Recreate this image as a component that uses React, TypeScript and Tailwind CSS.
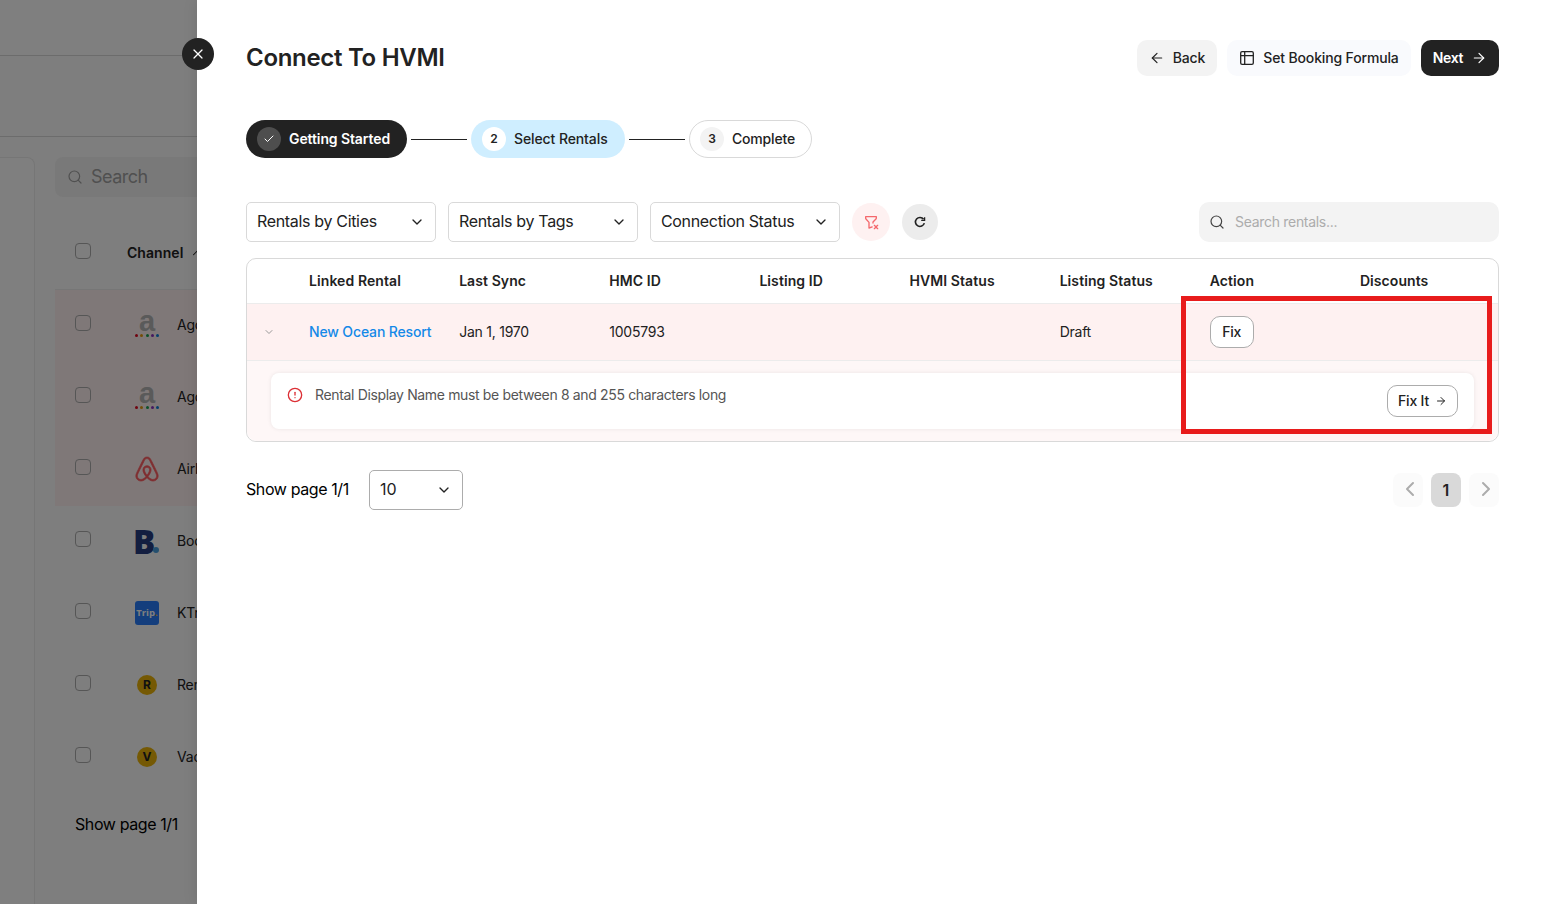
import React from 'react';
import {
    AlertCircle,
    ArrowLeft,
    ArrowRight,
    Check,
    ChevronDown,
    ChevronLeft,
    ChevronRight,
    ChevronUp,
    Search,
    X,
} from 'lucide-react';
import { SiAirbnb } from 'react-icons/si';
import { TbFilterX } from 'react-icons/tb';

const AgodaLogo = () => (
    <div className="flex h-6 w-6 flex-col items-center justify-between">
        <span className="h-[19px] font-['Liberation_Sans'] text-[29px] leading-[16px] font-bold text-[#b4b4b4]">a</span>
        <div className="flex w-full justify-between">
            <i className="h-[3px] w-[3px] rounded-full bg-[#e1061f]" />
            <i className="h-[3px] w-[3px] rounded-full bg-[#e89a0c]" />
            <i className="h-[3px] w-[3px] rounded-full bg-[#18a052]" />
            <i className="h-[3px] w-[3px] rounded-full bg-[#8a2fc0]" />
            <i className="h-[3px] w-[3px] rounded-full bg-[#0c7fd8]" />
        </div>
    </div>
);

const BookingLogo = () => (
    <div className="flex h-6 w-6 items-end justify-between">
        <span className="-ml-0.5 w-[18px] font-['Open_Sans'] text-[33px] leading-[23px] font-extrabold tracking-[-1px] text-[#263c80]">B</span>
        <i className="h-1.5 w-1.5 shrink-0 rounded-full bg-[#499fdd]" />
    </div>
);

const TripLogo = () => (
    <div className="flex h-6 w-6 items-center justify-center rounded-[3px] bg-[#287dfa] pb-px font-['Open_Sans'] text-[9.5px] leading-none font-bold text-white">
        Trip<span className="text-[#ffb400]">.</span>
    </div>
);

const LetterLogo = ({ letter }: { letter: string }) => (
    <div className="flex h-5 w-5 items-center justify-center rounded-full bg-[#eab308] text-[12px] font-bold text-[#222]">
        {letter}
    </div>
);

const channels = [
    { name: 'Agoda', logo: <AgodaLogo />, error: true },
    { name: 'Agoda', logo: <AgodaLogo />, error: true },
    { name: 'Airbnb', logo: <SiAirbnb strokeWidth={0.7} className="h-6 w-6 shrink-0 overflow-visible text-[#ff5a5f]" />, error: true },
    { name: 'Booking', logo: <BookingLogo />, error: false },
    { name: 'KTrip', logo: <TripLogo />, error: false },
    { name: 'Rentals', logo: <LetterLogo letter="R" />, error: false },
    { name: 'Vacation', logo: <LetterLogo letter="V" />, error: false },
];

const Checkbox = () => <span className="mb-1 block h-4 w-4 shrink-0 rounded-[4px] border border-[#acacac]" />;

const ChannelsPage = () => (
    <div className="flex h-full w-full flex-col bg-[#fcfcfc]">
        <div className="h-14 shrink-0 border-b border-[#d9d9d9] bg-white" />
        <div className="h-[81px] shrink-0 border-b border-[#d9d9d9]" />
        <div className="flex flex-1 gap-5 pt-5">
            <div className="w-[35px] shrink-0 rounded-tr-lg border-t border-r border-[#ececec] bg-white" />
            <div className="flex flex-1 flex-col">
                <div className="flex h-10 items-center gap-2 rounded-lg bg-[#f3f3f3] px-3 text-[#a0a0a0]">
                    <Search size={16} strokeWidth={1.8} />
                    <span className="pb-0.5 text-[18px] tracking-[-0.5px]">Search</span>
                </div>
                <div className="mt-5 flex h-[73px] items-center border-b border-[#ececec] pl-5">
                    <Checkbox />
                    <span className="ml-9 text-sm font-semibold tracking-[0.05px] text-[#222]">Channel</span>
                    <ChevronUp size={14} strokeWidth={1.8} className="ml-[7px] text-[#222]" />
                </div>
                {channels.map((channel, i) => (
                    <div
                        key={i}
                        className={`flex h-[72px] shrink-0 items-center pb-0.5 pl-5 ${channel.error ? 'bg-[#fef0f0]' : ''}`}
                    >
                        <Checkbox />
                        <div className="ml-11 flex w-6 shrink-0 justify-center">{channel.logo}</div>
                        <span className="ml-[18px] text-sm tracking-[-0.2px] text-[#222]">{channel.name}</span>
                    </div>
                ))}
                <div className="mt-[18px] pl-5 text-base tracking-[-0.4px] text-black">Show page 1/1</div>
            </div>
        </div>
    </div>
);

const TableIcon = () => (
    <svg width="16" height="16" viewBox="0 0 16 16" fill="none" stroke="currentColor" strokeWidth="1.3">
        <rect x="1.7" y="1.7" width="12.6" height="12.6" rx="1.4" />
        <path d="M1.7 5.7h12.6M5.7 1.7v12.6" />
    </svg>
);

const ReloadIcon = () => (
    <svg width="12" height="12" viewBox="0 0 12 12" fill="none" stroke="currentColor" strokeWidth="1.6">
        <path d="M10.3 7.1A4.5 4.5 0 1 1 9.6 3.3" />
        <path d="M10.6 1.2v3.2H7.2" strokeWidth="1.3" />
    </svg>
);

const Select = ({ label }: { label: string }) => (
    <button className="flex h-10 w-[190px] items-center justify-between rounded-[5px] border border-[#d9d9d9] bg-white px-2.5 text-base tracking-[-0.33px] text-[#222]">
        <span className="pb-0.5">{label}</span>
        <ChevronDown size={16} strokeWidth={2} />
    </button>
);

const StepLine = () => <span className="mx-1 h-px w-14 bg-[#222]" />;

const columns = [
    'Linked Rental',
    'Last Sync',
    'HMC ID',
    'Listing ID',
    'HVMI Status',
    'Listing Status',
    'Action',
    'Discounts',
];

const RentalsTable = () => (
    <div className="relative mt-4 rounded-[10px] border border-[#d9d9d9] text-sm text-[#222]">
        <div className="grid h-11 grid-cols-[50px_repeat(8,1fr)] items-center font-semibold tracking-[0.08px]">
            <span />
            {columns.map((column) => (
                <span key={column} className="px-3">{column}</span>
            ))}
        </div>
        <div className="grid h-[58px] grid-cols-[50px_repeat(8,1fr)] items-center border-y border-[#ececec] bg-[#fef1f1] tracking-[-0.24px]">
            <ChevronDown size={12} className="ml-4 text-[#999]" />
            <a className="px-3 font-medium tracking-[-0.14px] whitespace-nowrap text-[#1489e8]">New Ocean Resort</a>
            <span className="px-3">Jan 1, 1970</span>
            <span className="px-3">1005793</span>
            <span />
            <span />
            <span className="px-3">Draft</span>
            <div className="px-3">
                <button className="h-8 w-11 rounded-[10px] border border-[#acacac] bg-white font-medium">Fix</button>
            </div>
            <span />
        </div>
        <div className="rounded-b-[10px] bg-[#fef7f7] px-6 py-3">
            <div className="flex h-14 items-start rounded-lg bg-white pt-3 pr-[16px] pl-4 shadow-[0_0_4px_rgba(0,0,0,0.08)]">
                <AlertCircle size={16} strokeWidth={2} className="mt-0.5 text-[#dc2f35]" />
                <span className="ml-3 leading-5 tracking-[-0.35px] text-[#555]">
                    Rental Display Name must be between 8 and 255 characters long
                </span>
                <button className="ml-auto flex h-8 w-[71px] items-center justify-center gap-1.5 rounded-[10px] border border-[#acacac] bg-white font-medium tracking-[-0.2px]">
                    Fix It
                    <ArrowRight size={12} />
                </button>
            </div>
        </div>
        {/* Highlight around the fix actions */}
        <div className="pointer-events-none absolute top-[37px] right-[6px] h-[138px] w-[311px] border-[5px] border-[#e81c1c]" />
    </div>
);

const Drawer = () => (
    <div className="absolute inset-y-0 right-0 w-[1349px] bg-white pt-10 pr-[47px] pl-[49px] shadow-[0_0_14px_rgba(0,0,0,0.1)]">
        <button
            aria-label="Close"
            className="absolute top-[38px] -left-[15px] flex h-8 w-8 items-center justify-center rounded-full bg-[#222] text-white"
        >
            <X size={16} strokeWidth={1.8} />
        </button>

        <div className="flex h-9 items-center justify-between text-[#222]">
            <h1 className="text-2xl font-semibold tracking-[-0.3px]">Connect To HVMI</h1>
            <div className="flex gap-2.5 text-sm font-medium">
                <button className="flex h-9 w-20 items-center justify-center gap-2 rounded-[10px] bg-[#f3f3f3] tracking-[-0.1px]">
                    <ArrowLeft size={16} strokeWidth={1.8} />
                    Back
                </button>
                <button className="flex h-9 w-[184px] items-center justify-center gap-2 rounded-[10px] bg-[#f9fafd] tracking-[-0.15px]">
                    <TableIcon />
                    Set Booking Formula
                </button>
                <button className="flex h-9 w-[78px] items-center justify-center gap-2 rounded-[10px] bg-[#222] font-semibold tracking-[-0.3px] text-white">
                    Next
                    <ArrowRight size={16} strokeWidth={1.8} />
                </button>
            </div>
        </div>

        <div className="mt-11 flex items-center text-sm font-medium text-[#222]">
            <div className="flex h-[38px] w-[161px] items-center gap-2 rounded-full bg-[#222] pl-[11px] font-semibold tracking-[-0.1px] text-white">
                <span className="flex h-6 w-6 items-center justify-center rounded-full bg-[#4e4e4e]">
                    <Check size={12} strokeWidth={2} />
                </span>
                Getting Started
            </div>
            <StepLine />
            <div className="flex h-[38px] w-[154px] items-center gap-2 rounded-full bg-[#cfeeff] pl-[11px] tracking-[-0.1px]">
                <span className="flex h-6 w-6 items-center justify-center rounded-full bg-white text-xs font-semibold">2</span>
                Select Rentals
            </div>
            <StepLine />
            <div className="flex h-[38px] w-[123px] items-center gap-2 rounded-full border border-[#d9d9d9] pl-[10px] tracking-[-0.18px]">
                <span className="flex h-6 w-6 items-center justify-center rounded-full bg-[#f3f3f3] text-xs font-semibold">3</span>
                Complete
            </div>
        </div>

        <div className="mt-11 flex items-center gap-3">
            <Select label="Rentals by Cities" />
            <Select label="Rentals by Tags" />
            <Select label="Connection Status" />
            <button className="flex h-[38px] w-[38px] items-center justify-center rounded-full bg-[#fef1f1] text-[#f4686c]">
                <TbFilterX size={16} />
            </button>
            <button className="flex h-9 w-9 items-center justify-center rounded-full bg-[#ececec] text-[#222]">
                <ReloadIcon />
            </button>
            <div className="ml-auto flex h-10 w-[300px] items-center gap-2.5 rounded-[10px] bg-[#f3f3f3] pl-2.5 text-sm tracking-[-0.3px] text-[#acacac]">
                <Search size={16} strokeWidth={1.8} className="text-[#444]" />
                Search rentals...
            </div>
        </div>

        <RentalsTable />

        <div className="mt-7 flex items-center">
            <span className="w-[103px] pb-0.5 text-base tracking-[-0.4px] whitespace-nowrap text-black">Show page 1/1</span>
            <button className="ml-5 flex h-10 w-[94px] items-center justify-between rounded-[5px] border border-[#acacac] px-2.5 text-base text-[#222]">
                <span className="pb-0.5">10</span>
                <ChevronDown size={16} />
            </button>
            <div className="ml-auto flex gap-2 text-[#acacac]">
                <span className="flex h-[34px] w-[30px] items-center justify-center rounded-lg bg-[#fbfbfb] pb-0.5 pl-1">
                    <ChevronLeft size={24} strokeWidth={2} />
                </span>
                <span className="flex h-[34px] w-[30px] items-center justify-center rounded-lg bg-[#d9d9d9] text-base font-semibold text-[#222]">
                    1
                </span>
                <span className="flex h-[34px] w-[30px] items-center justify-center rounded-lg bg-[#fbfbfb] pb-0.5 pl-1">
                    <ChevronRight size={24} strokeWidth={2} />
                </span>
            </div>
        </div>
    </div>
);

const App = () => (
    <div className="relative h-screen w-full overflow-hidden font-['Inter',sans-serif]">
        <ChannelsPage />
        <div className="absolute inset-0 bg-black/50" />
        <Drawer />
    </div>
);

export default App;
